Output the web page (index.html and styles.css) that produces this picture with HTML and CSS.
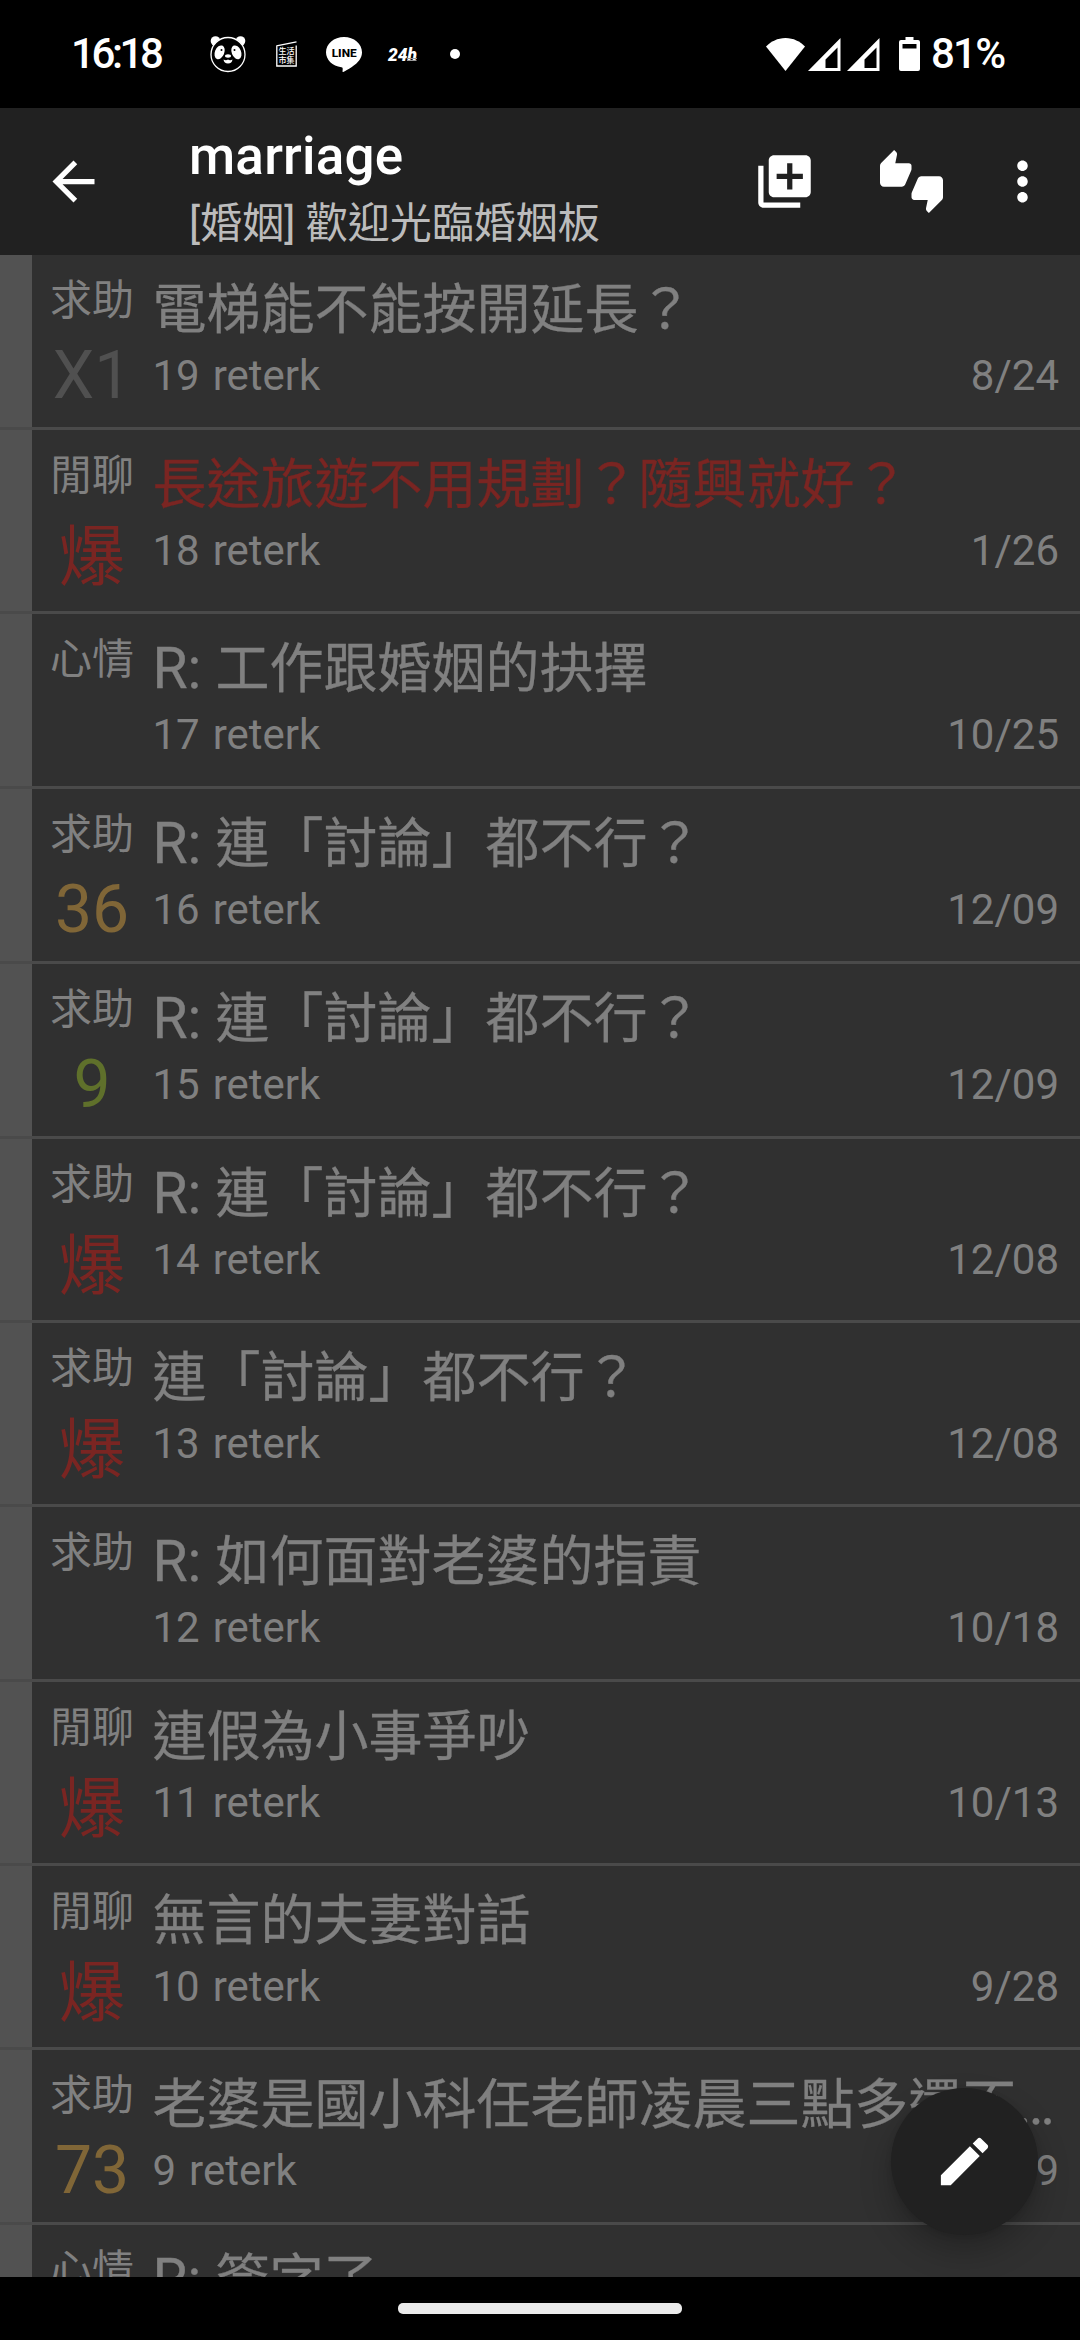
FILE: index.html
```html
<!DOCTYPE html>
<html lang="zh-Hant">
<head>
<meta charset="utf-8">
<title>marriage</title>
<link rel="stylesheet" href="styles.css">
</head>
<body>
<div class="screen">
  <header class="status">
    <span class="clock">16:18</span>
    <div class="notices">
      <svg class="panda" viewBox="0 0 36 36"><g fill="#fff"><circle cx="5.5" cy="5" r="4.8"/><circle cx="30.5" cy="5" r="4.8"/></g><circle cx="18" cy="18.5" r="17" fill="#000" stroke="#fff" stroke-width="1.3"/><g fill="#fff"><ellipse cx="9.6" cy="16.3" rx="4.7" ry="7.2" transform="rotate(22 9.6 16.3)"/><ellipse cx="26.4" cy="16.3" rx="4.7" ry="7.2" transform="rotate(-22 26.4 16.3)"/><ellipse cx="18" cy="20" rx="3" ry="1.7"/><path d="M13.5 23.5q2.5 1.5 4.5 0q2 1.5 4.5 0q-.5 4-4.500 4t-4.500-4z"/></g><circle cx="11.5" cy="14" r="1" fill="#000"/><circle cx="24.5" cy="14" r="1" fill="#000"/></svg>
      <svg class="market" viewBox="0 0 21 26"><path d="M.8 4.5V25h19.4V4.5M.5 4.800 20.5.8" fill="none" stroke="#fff" stroke-width="1.3"/><g fill="#fff" font-family="Noto Sans CJK TC, sans-serif" font-weight="500" font-size="8" text-anchor="middle"><text x="10.5" y="13">生活</text><text x="10.5" y="21.600">市集</text></g></svg>
      <svg class="line" viewBox="0 0 36 35"><path d="M18 0C8 0 0 6.800 0 15.300c0 7.500 6.400 13.900 15.400 15 1.500.3 1.500 1.200 1.100 4.300 0 .4.4.5.8.3C22 32.500 30 28 33.500 23 35.200 20.600 36 18 36 15.300 36 6.800 28 0 18 0z" fill="#fff"/><text x="18.200" y="19.700" text-anchor="middle" font-family="Roboto, sans-serif" font-weight="800" font-size="11.500" textLength="25" lengthAdjust="spacingAndGlyphs">LINE</text></svg>
      <svg class="day" viewBox="0 0 30 15"><text x="0" y="14.2" font-family="Roboto, sans-serif" font-weight="900" font-style="italic" font-size="19" fill="#fff" textLength="29" lengthAdjust="spacingAndGlyphs">24h</text><path d="M19 11.500h10M19 13.500h9.500" stroke="#999" stroke-width="1.200"/></svg>
      <i class="dot"></i>
    </div>
    <div class="system">
      <svg class="wifi" viewBox="0 0 39 33"><path d="M19.500 33 0 8.500C5 3.500 11.500 0 19.500 0S34 3.500 39 8.500z" fill="#fff"/></svg>
      <svg class="signal" viewBox="0 0 33 33"><path fill-rule="evenodd" d="M0 33 32.500 0v33zM17.500 30h12V9.500l-12 12z" fill="#fff"/></svg>
      <svg class="signal" viewBox="0 0 33 33"><path fill-rule="evenodd" d="M0 33 32.500 0v33zM17.500 30h12V9.500l-12 12z" fill="#fff"/></svg>
      <svg class="battery" viewBox="0 0 21 34"><path fill-rule="evenodd" d="M6.500 0h8v3H19q2 0 2 2v27q0 2-2 2H2q-2 0-2-2V5q0-2 2-2h4.500zM3.500 7v4.500h14V7z" fill="#fff"/></svg>
      <span class="percent">81%</span>
    </div>
  </header>

  <div class="appbar">
    <svg class="icon" viewBox="0 0 24 24"><path d="M20 11H7.830l5.590-5.590L12 4l-8 8 8 8 1.410-1.410L7.830 13H20v-2z"/></svg>
    <div class="heading">
      <h1>marriage</h1>
      <p>[婚姻] 歡迎光臨婚姻板</p>
    </div>
    <div class="actions">
      <svg class="icon" viewBox="0 0 24 24"><path d="M4 6H2v14c0 1.100.9 2 2 2h14v-2H4V6zm16-4H8c-1.100 0-2 .9-2 2v12c0 1.100.9 2 2 2h12c1.100 0 2-.9 2-2V4c0-1.100-.9-2-2-2zm-1 9h-4v4h-2v-4H9V9h4V5h2v4h4v2z"/></svg>
      <svg class="icon" viewBox="0 0 24 24"><path d="M12 6c0-.55-.45-1-1-1H5.820l.66-3.180.02-.23c0-.31-.13-.59-.33-.8L5.380 0 .44 4.940C.17 5.210 0 5.590 0 6v6.500c0 .83.67 1.500 1.500 1.500h6.750c.62 0 1.150-.38 1.380-.91l2.260-5.290c.07-.17.11-.36.11-.55V6zm10.500 4h-6.750c-.62 0-1.150.38-1.380.91l-2.260 5.290c-.07.17-.11.36-.11.55V18c0 .55.45 1 1 1h5.180l-.66 3.180-.02.24c0 .31.13.59.33.8l.79.78 4.940-4.940c.27-.27.44-.65.44-1.060v-6.500c0-.83-.67-1.500-1.500-1.500z"/></svg>
      <svg class="icon" viewBox="0 0 24 24"><path d="M12 8c1.100 0 2-.9 2-2s-.9-2-2-2-2 .9-2 2 .9 2 2 2zm0 2c-1.100 0-2 .9-2 2s.9 2 2 2 2-.9 2-2-.9-2-2-2zm0 6c-1.100 0-2 .9-2 2s.9 2 2 2 2-.9 2-2-.9-2-2-2z"/></svg>
    </div>
  </div>

  <main class="list">
    <article class="row"><div class="side"><span class="tag">求助</span><b class="score down">X1</b></div><div class="post"><h2>電梯能不能按開延長？</h2><div class="meta"><span>19</span><span>reterk</span><time>8/24</time></div></div></article>
    <article class="row hot"><div class="side"><span class="tag">閒聊</span><b class="score burst">爆</b></div><div class="post"><h2 class="marked">長途旅遊不用規劃？隨興就好？</h2><div class="meta"><span>18</span><span>reterk</span><time>1/26</time></div></div></article>
    <article class="row"><div class="side"><span class="tag">心情</span></div><div class="post"><h2><span class="re">R: </span>工作跟婚姻的抉擇</h2><div class="meta"><span>17</span><span>reterk</span><time>10/25</time></div></div></article>
    <article class="row"><div class="side"><span class="tag">求助</span><b class="score mid">36</b></div><div class="post"><h2><span class="re">R: </span>連「討論」都不行？</h2><div class="meta"><span>16</span><span>reterk</span><time>12/09</time></div></div></article>
    <article class="row"><div class="side"><span class="tag">求助</span><b class="score low">9</b></div><div class="post"><h2><span class="re">R: </span>連「討論」都不行？</h2><div class="meta"><span>15</span><span>reterk</span><time>12/09</time></div></div></article>
    <article class="row hot"><div class="side"><span class="tag">求助</span><b class="score burst">爆</b></div><div class="post"><h2><span class="re">R: </span>連「討論」都不行？</h2><div class="meta"><span>14</span><span>reterk</span><time>12/08</time></div></div></article>
    <article class="row hot"><div class="side"><span class="tag">求助</span><b class="score burst">爆</b></div><div class="post"><h2>連「討論」都不行？</h2><div class="meta"><span>13</span><span>reterk</span><time>12/08</time></div></div></article>
    <article class="row"><div class="side"><span class="tag">求助</span></div><div class="post"><h2><span class="re">R: </span>如何面對老婆的指責</h2><div class="meta"><span>12</span><span>reterk</span><time>10/18</time></div></div></article>
    <article class="row hot"><div class="side"><span class="tag">閒聊</span><b class="score burst">爆</b></div><div class="post"><h2>連假為小事爭吵</h2><div class="meta"><span>11</span><span>reterk</span><time>10/13</time></div></div></article>
    <article class="row hot"><div class="side"><span class="tag">閒聊</span><b class="score burst">爆</b></div><div class="post"><h2>無言的夫妻對話</h2><div class="meta"><span>10</span><span>reterk</span><time>9/28</time></div></div></article>
    <article class="row"><div class="side"><span class="tag">求助</span><b class="score mid">73</b></div><div class="post"><h2>老婆是國小科任老師凌晨三點多還不<span class="more">…</span></h2><div class="meta"><span>9</span><span>reterk</span><time>9</time></div></div></article>
    <article class="row"><div class="side"><span class="tag">心情</span></div><div class="post"><h2><span class="re">R: </span>簽字了</h2></div></article>
    <button class="fab" aria-label="compose"><svg class="icon" viewBox="0 0 24 24"><path d="M3 17.250V21h3.750L17.810 9.940l-3.750-3.750L3 17.250zM20.710 7.040c.39-.39.39-1.020 0-1.410l-2.340-2.340c-.39-.39-1.020-.39-1.410 0l-1.830 1.830 3.750 3.750 1.830-1.830z"/></svg></button>
  </main>

  <footer class="nav"><i class="pill"></i></footer>
</div>
</body>
</html>
```
FILE: styles.css
```css
* { box-sizing: border-box; margin: 0; }
body {
  background: #000;
  font-family: Roboto, "Noto Sans CJK TC", sans-serif;
  color: #808080;
}
svg { display: block; flex: none; overflow: visible; }
.screen { width: 1080px; height: 2340px; display: flex; flex-direction: column; overflow: hidden; }

.status { height: 108px; flex: none; display: flex; align-items: center; padding: 0 75px 0 71px; color: #fff; }
.clock, .percent { font-weight: 500; font-size: 42px; line-height: 50px; }
.clock { width: 139px; flex: none; letter-spacing: -3.4px; }
.notices { display: flex; align-items: center; }
.panda { width: 36px; height: 36px; }
.market { width: 21px; height: 26px; margin-left: 30px; }
.line { width: 36px; height: 35px; margin-left: 29px; }
.day { width: 30px; height: 15px; margin-left: 26px; }
.dot { width: 10px; height: 10px; border-radius: 50%; background: #fff; margin-left: 32px; }
.system { margin-left: auto; display: flex; align-items: center; }
.wifi { width: 39px; height: 33px; margin-right: 3px; }
.signal { width: 33px; height: 33px; margin-right: 6px; }
.battery { width: 21px; height: 34px; margin: 0 11px 0 13px; }
.percent { width: 74px; letter-spacing: -1.8px; }

.appbar { height: 147px; flex: none; background: #212121; display: flex; align-items: center; padding: 0 26px 0 42px; }
.icon { width: 63px; height: 63px; fill: #fff; }
.heading { margin-left: 84px; height: 147px; padding-top: 17px; }
.heading h1 { font-size: 53px; line-height: 62px; font-weight: 500; color: #fff; letter-spacing: .2px; }
.heading p { font-size: 42px; line-height: 50px; margin-top: 12px; color: #bcbcbc; white-space: nowrap; }
.actions { margin-left: auto; display: flex; gap: 0; }
.actions .icon + .icon { margin-left: 64px; }
.actions .icon:last-child { margin-left: 48px; }

.list { height: 2022px; flex: none; overflow: hidden; background: #303030; position: relative; }
.row {
  height: 175px;
  border-bottom: 3px solid #4a4a4a;
  background: linear-gradient(#525252, #525252) left / 32px 100% no-repeat;
  padding: 0 21px 0 32px;
  display: flex;
}
.hot { height: 184px; }
.side { width: 120px; flex: none; display: flex; flex-direction: column; align-items: center; padding-top: 21px; }
.tag { font-size: 42px; line-height: 50px; }
.score { font-size: 66px; line-height: 78px; font-weight: 400; margin-top: 11px; }
.burst { margin-top: 18px; color: #7a2522; }
.down { color: #505050; }
.mid { color: #806637; }
.low { color: #5f702b; }
.post { flex: 1; min-width: 0; padding: 24px 0 0 .5px; }
h2 { font-size: 54px; line-height: 64px; height: 64px; font-weight: 400; white-space: nowrap; -webkit-text-stroke: .3px currentColor; }
.marked { color: #7a2522; }
.re, .more { font-size: 57px; line-height: 1; white-space: pre; }
.meta { font-size: 42px; line-height: 50px; margin-top: 8px; display: flex; gap: 13px; }
.meta time { margin-left: auto; }

.fab {
  position: absolute;
  right: 42px;
  bottom: 42px;
  width: 147px;
  height: 147px;
  border: 0;
  border-radius: 50%;
  background: #212121;
  display: flex;
  align-items: center;
  justify-content: center;
  box-shadow: 0 16px 32px rgba(0, 0, 0, .24), 0 2px 6px rgba(0, 0, 0, .1);
}

.nav { height: 63px; flex: none; display: flex; justify-content: center; padding-top: 26px; }
.pill { width: 284px; height: 11px; border-radius: 5px; background: #ebebeb; }
```
